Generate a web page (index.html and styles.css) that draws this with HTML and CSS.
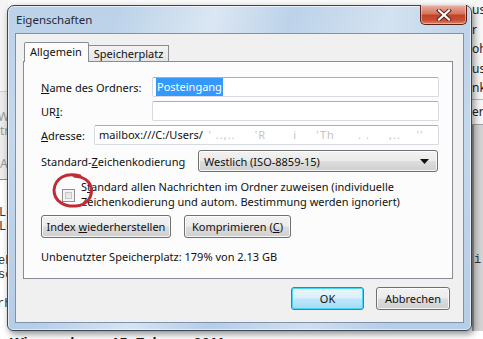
FILE: index.html
```html
<!DOCTYPE html>
<html lang="de">
<head>
<meta charset="utf-8">
<title>Eigenschaften</title>
<link rel="stylesheet" href="styles.css">
</head>
<body>
<div class="page">
  <div class="page-top">
    <div class="bg-left">
      <div class="bgl-top"></div>
      <div class="bgl-grey">
        <div class="bgl-line g1">We</div>
        <div class="bgl-line g2">tr</div>
        <div class="bgl-line g3">A</div>
      </div>
      <div class="bgl-white">
        <div class="bgl-line m1">Le</div>
        <div class="bgl-line m2">Le</div>
        <div class="bgl-line m3">eh</div>
        <div class="bgl-line m4">sc</div>
        <div class="bgl-line m5">rh</div>
      </div>
    </div>
    <div class="bg-mid"></div>
    <div class="bg-right">
      <div class="bgr-top">
        <div class="bgr-line">us</div>
        <div class="bgr-line">r</div>
        <div class="bgr-line">oh</div>
        <div class="bgr-line">us</div>
        <div class="bgr-line">nk</div>
        <div class="bgr-sep"></div>
        <div class="bgr-line">erl</div>
      </div>
      <div class="bgr-grey"><span class="bgr-i">i</span></div>
    </div>
  </div>
  <div class="page-bottom">Wie wurde am 15. Februar 2011</div>
</div>

<div class="win">
  <div class="titlebar">
    <span class="title">Eigenschaften</span>
    <div class="close">
      <svg width="18" height="12" viewBox="0 0 18 12">
        <path d="M4 1.5 L14 10.5 M14 1.5 L4 10.5" stroke="#5a1f17" stroke-width="4" stroke-linecap="square"/>
        <path d="M4 1.5 L14 10.5 M14 1.5 L4 10.5" stroke="#ffffff" stroke-width="2.2" stroke-linecap="square"/>
      </svg>
    </div>
  </div>
  <div class="client">
    <div class="tabs">
      <div class="tab tab-sel">Allgemein</div>
      <div class="tab">Speicherplatz</div>
    </div>
    <div class="panel">
      <div class="row row-name">
        <div class="lbl lbl-name"><u>N</u>ame des Ordners:</div>
        <div class="input input-long"><span class="sel-text">Posteingang</span></div>
      </div>
      <div class="row row-uri">
        <div class="lbl lbl-name">UR<u>I</u>:</div>
        <div class="input input-long"></div>
      </div>
      <div class="row row-adr">
        <div class="lbl lbl-adr"><u>A</u>dresse:</div>
        <div class="input input-adr">mailbox:///C:/Users/<span class="hidden-text">&#8201;&#8201;' ..,.. &nbsp;&nbsp;&nbsp; 'R &nbsp;&nbsp;&nbsp;&nbsp;&nbsp; i &nbsp;&nbsp;&nbsp; 'Th &nbsp;&nbsp;&nbsp;&nbsp; . . &nbsp;&nbsp;&nbsp; ,.. &nbsp;&nbsp; ''</span></div>
      </div>
      <div class="row row-enc">
        <div class="lbl lbl-enc">Standard-<u>Z</u>eichenkodierung</div>
        <div class="select">
          <span>Westlich (ISO-8859-15)</span>
          <svg class="arrow" width="9" height="5" viewBox="0 0 9 5"><path d="M0 0 H9 L4.5 5 Z" fill="#111"/></svg>
        </div>
      </div>
      <div class="row row-check">
        <div class="checkbox"></div>
        <div class="check-text">S<u>t</u>andard allen Nachrichten im Ordner zuweisen (individuelle<br>Zeichenkodierung und autom. Bestimmung werden ignoriert)</div>
        <svg class="mark" width="52" height="44" viewBox="0 0 52 44">
          <path d="M30 8 C16 4,5 10,4 22 C4 33,14 39,26 38 C38 37,43 28,41 19 C39 12,34 9,24 8" fill="none" stroke="#c22a35" stroke-width="3" stroke-linecap="round"/>
        </svg>
      </div>
      <div class="row row-btns">
        <div class="btn btn-index"><span>Index <u>w</u>iederherstellen</span></div>
        <div class="btn btn-komp"><span>Komprimieren (<u>C</u>)</span></div>
      </div>
      <div class="row row-free">Unbenutzter Speicherplatz: 179% von 2.13 GB</div>
    </div>
    <div class="actions">
      <div class="btn btn-ok"><span>OK</span></div>
      <div class="btn btn-cancel"><span>Abbrechen</span></div>
    </div>
  </div>
</div>
</body>
</html>
```

FILE: styles.css
```css
* { box-sizing: border-box; }
html, body { margin: 0; padding: 0; width: 483px; height: 339px; overflow: hidden; }
body {
  position: relative;
  background: #ffffff;
  font-family: "Noto Sans", "Open Sans", sans-serif;
  font-size: 11px;
  color: #111;
}
u { text-decoration: underline; text-underline-offset: 1px; }

/* ---------- background page ---------- */
.page { display: flex; flex-direction: column; height: 339px; }
.page-top { display: flex; height: 331px; }
.bg-left { width: 8px; display: flex; flex-direction: column; overflow: hidden; }
.bgl-top { height: 92px; background: #f4f4f4; border-bottom: 1px solid #cfcfcf; }
.bgl-grey { height: 88px; background: #ececec; border-bottom: 1px solid #8d8d8d; padding-top: 18px; }
.bgl-line { white-space: nowrap; font-family: "Liberation Mono", monospace; font-size: 12px; line-height: 14px; }
.g1, .g2, .g3 { color: #9a9a9a; font-family: "Noto Sans", sans-serif; font-size: 12px; }
.g1 { margin-left: -2px; }
.g3 { margin-top: 19px; }
.bgl-white { flex: 1; background: #fff; padding-top: 26px; color: #333; }
.m1 { margin-left: -1px; }
.m2 { margin-left: -1px; }
.m3 { margin-top: 20px; margin-left: -2px; }
.m4 { margin-left: -2px; }
.m5 { margin-top: 15px; margin-left: -3px; }
.bg-mid { flex: 1; background: #fafafa; }
.bg-right { width: 11px; display: flex; flex-direction: column; overflow: hidden; }
.bgr-top { height: 125px; background: #f6f6f6; border-bottom: 1px solid #a0a0a0; }
.bgr-line { font-size: 12px; line-height: 19.5px; white-space: nowrap; color: #222; }
.bgr-sep { height: 1px; background: #b8b8b8; margin: 1px 0 2px; }
.bgr-grey { flex: 1; background: #d2d2d2; border-left: 2px solid #9a9a9a; padding-top: 126px; }
.bgr-i { font-family: "Liberation Mono", monospace; font-size: 12px; color: #333; }
.page-bottom {
  height: 8px; overflow: hidden; padding-left: 10px;
  font-family: "Liberation Sans", sans-serif; font-weight: bold; font-size: 14.5px; line-height: 18px;
  color: #1a1a1a; padding-top: 3px; background: #fff; white-space: nowrap;
}

/* ---------- window ---------- */
.win {
  position: absolute;
  left: 7px; top: 5px;
  width: 465px; height: 326px;
  border: 1px solid #3a4656;
  border-radius: 7px 7px 6px 6px;
  background:
    linear-gradient(105deg, rgba(255,255,255,0) 20%, rgba(255,255,255,0.45) 38%, rgba(255,255,255,0) 52%, rgba(255,255,255,0.35) 70%, rgba(255,255,255,0) 85%),
    linear-gradient(180deg, #bcd2e9 0%, #c4d8ed 40%, #b6cde6 100%);
  box-shadow: 2px 3px 7px rgba(0,0,0,0.45), inset 0 0 0 1px rgba(255,255,255,0.6);
  display: flex; flex-direction: column;
}
.titlebar { position: relative; height: 27px; padding-left: 8px; display: flex; align-items: center; }
.title { font-family: "Noto Sans", sans-serif; font-size: 11.5px; color: #1e2a38; padding-top: 0; }
.close {
  position: absolute; right: 4px; top: -1px;
  width: 47px; height: 20px;
  border: 1px solid #5b2219; border-top: none;
  border-radius: 0 0 5px 5px;
  background: linear-gradient(180deg, #eab1a6 0%, #d8765f 45%, #c2432b 55%, #c84f33 80%, #dd8665 100%);
  box-shadow: inset 0 0 0 1px rgba(255,220,210,0.5);
  display: flex; align-items: center; justify-content: center;
}

.client {
  margin: 0 7px 7px 7px;
  flex: 1;
  background: #f0f0f0;
  border: 1px solid #7c93ad;
  padding: 8px 0 0 7px;
  display: flex; flex-direction: column;
}

/* tabs */
.tabs { display: flex; align-items: flex-end; height: 19px; padding-left: 1px; position: relative; z-index: 2; }
.tab {
  height: 16px; padding: 0 5px 0 5px;
  border: 1px solid #898c95; border-bottom: none;
  background: linear-gradient(180deg, #f3f3f3, #e4e4e4);
  font-size: 11px; line-height: 15px; color: #111;
  margin-left: -1px;
}
.tab-sel {
  height: 20px; margin-bottom: -1px; margin-left: 0;
  background: #fcfcfc; padding: 0 6px 0 5px; line-height: 18px;
  border-radius: 2px 2px 0 0;
}
.panel {
  width: 430px; height: 218px;
  background: #fcfcfc;
  border: 1px solid #898c95;
  padding: 15px 0 0 17px;
  display: flex; flex-direction: column;
}
.row { display: flex; align-items: center; }
.lbl { font-size: 11px; white-space: nowrap; }
.lbl-name { width: 111px; }
.lbl-adr { width: 53px; }
.lbl-enc { width: 157px; }
.input {
  height: 20px;
  border: 1px solid #d6dbe2; border-top-color: #abadb3;
  border-radius: 2px;
  background: #fff;
  font-size: 11px; line-height: 18px;
  padding-left: 3px;
  white-space: nowrap; overflow: hidden;
}
.input-long { width: 287px; }
.input-adr { width: 345px; padding-left: 4px; }
.sel-text { background: #3399ff; color: #fff; padding: 1px 1px 2px 1px; }
.hidden-text { color: #c4c4c4; letter-spacing: 1px; }
.row-uri { margin-top: 4px; }
.row-adr { margin-top: 4px; }
.row-enc { margin-top: 5px; }
.select {
  width: 240px; height: 22px;
  border: 1px solid #707070; border-radius: 3px;
  background: linear-gradient(180deg, #f2f2f2 0%, #ebebeb 48%, #dddddd 52%, #cfcfcf 100%);
  box-shadow: inset 0 0 0 1px rgba(255,255,255,0.8);
  display: flex; align-items: center; justify-content: space-between;
  padding: 0 8px 0 5px;
  font-size: 11px;
}
.arrow { margin-top: 1px; }

.row-check { position: relative; align-items: flex-start; margin-top: 8px; padding-left: 21px; }
.checkbox {
  width: 13px; height: 13px; margin-top: 9px;
  border: 1px solid #8f8f8f;
  background: linear-gradient(135deg, #dcdcdc, #f6f6f6);
  box-shadow: inset 0 0 0 2px #f4f4f4, inset 0 0 0 3px #c6c6c6;
}
.check-text { margin-left: 6px; font-size: 11px; line-height: 14.5px; }
.mark { position: absolute; left: 9px; top: -12px; }

.row-btns { margin-top: 6px; gap: 13px; }
.btn {
  height: 23px;
  border: 1px solid #707070; border-radius: 3px;
  background: linear-gradient(180deg, #f2f2f2 0%, #ebebeb 48%, #dddddd 52%, #cfcfcf 100%);
  box-shadow: inset 0 0 0 1px rgba(255,255,255,0.8);
  display: flex; align-items: center; justify-content: center;
  font-size: 11px; color: #111; white-space: nowrap;
}
.btn-index { width: 130px; }
.btn-komp { width: 107px; }
.row-free { margin-top: 11px; font-size: 11px; line-height: 15px; }

.actions { display: flex; justify-content: flex-end; gap: 12px; width: 430px; padding-right: 3px; margin-top: 8px; }
.btn-ok {
  width: 73px;
  border-color: #3c7fb1;
  background: linear-gradient(180deg, #eaf6fd 0%, #d9f0fc 48%, #bee6fd 52%, #a7d9f5 100%);
  box-shadow: inset 0 0 0 1px #48d6f5;
}
.btn-cancel { width: 74px; }
```
